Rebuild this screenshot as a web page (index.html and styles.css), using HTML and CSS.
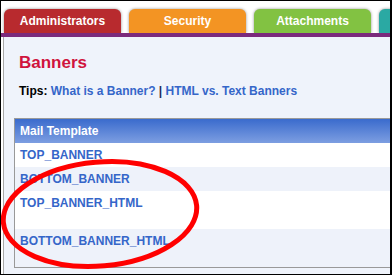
FILE: index.html
```html
<!DOCTYPE html>
<html lang="en">
<head>
    <meta charset="UTF-8">
    <title>Banners</title>
    <link rel="stylesheet" href="styles.css">
</head>
<body>
    <div class="frame">
        <div class="tabs">
            <div class="tab tab-red">Administrators</div>
            <div class="tab tab-orange">Security</div>
            <div class="tab tab-green">Attachments</div>
            <div class="tab tab-teal"></div>
        </div>
        <div class="bar"></div>

        <div class="panel">
            <h1>Banners</h1>
            <p class="tips"><b>Tips:</b> <a href="#">What is a Banner?</a> | <a href="#">HTML vs. Text Banners</a></p>

            <div class="grid">
                <div class="grid-head">Mail Template</div>
                <div class="grid-row"><a href="#">TOP_BANNER</a></div>
                <div class="grid-row alt"><a href="#">BOTTOM_BANNER</a></div>
                <div class="grid-row tall"><a href="#">TOP_BANNER_HTML</a></div>
                <div class="grid-row tall alt"><a href="#">BOTTOM_BANNER_HTML</a></div>
            </div>
        </div>

        <!-- hand-drawn highlight -->
        <svg class="circle" width="210" height="125" viewBox="0 150 210 125">
            <ellipse cx="100" cy="214" rx="97" ry="52" transform="rotate(-5 100 214)"
                     fill="none" stroke="#ff0000" stroke-width="5"/>
        </svg>
    </div>
</body>
</html>
```

FILE: styles.css
```css
body {
    margin: 0;
    font-family: "Liberation Sans", Arial, sans-serif;
}
.frame {
    position: relative;
    width: 392px;
    height: 275px;
    box-sizing: border-box;
    border: 1px solid #000;
    border-right-width: 2px;
    background: #fff;
    overflow: hidden;
}
.tabs {
    display: flex;
    gap: 8px;
    padding: 8px 0 0 3px;
}
.tab {
    flex: 0 0 117px;
    height: 24px;
    line-height: 25px;
    text-align: center;
    color: #fff;
    font-size: 12px;
    font-weight: bold;
    border-radius: 6px 6px 0 0;
    box-shadow: 0 0 3px rgba(0, 0, 0, 0.45);
}
.tab-red { background: #b82a2e; }
.tab-orange { background: #f39423; }
.tab-green { background: #82c242; }
.tab-teal { background: #2aa9a3; }
.bar {
    position: relative;
    height: 4px;
    background: #7b2a7c;
}
.panel {
    margin-left: 2px;
    border-left: 1px solid #a8a8a8;
    background: #eff3fb;
    padding: 16px 0 8px 10px;
    height: 240px;
}
h1 {
    margin: 0 0 0 5px;
    font-size: 17px;
    line-height: 20px;
    color: #d0133d;
}
.tips {
    margin: 10px 0 0 5px;
    font-size: 12px;
    line-height: 16px;
    font-weight: bold;
    color: #1a2a5a;
}
.tips b {
    color: #000;
}
a {
    color: #3566c9;
    text-decoration: none;
    font-weight: bold;
}
.grid {
    margin-top: 19px;
    border-top: 1px solid #999;
    border-left: 1px solid #999;
    border-bottom: 1px solid #999;
    font-size: 12px;
}
.grid-head {
    height: 24px;
    line-height: 24px;
    padding-left: 5px;
    color: #fff;
    font-weight: bold;
    background: linear-gradient(#3a6bcd, #7d9ee1);
}
.grid-row {
    height: 24px;
    padding: 5px 0 0 5px;
    box-sizing: border-box;
    line-height: 14px;
    background: #fff;
}
.grid-row.alt {
    background: #eef2fa;
}
.grid-row.tall {
    height: 38px;
}
.circle {
    position: absolute;
    left: -1px;
    top: 149px;
}
```
